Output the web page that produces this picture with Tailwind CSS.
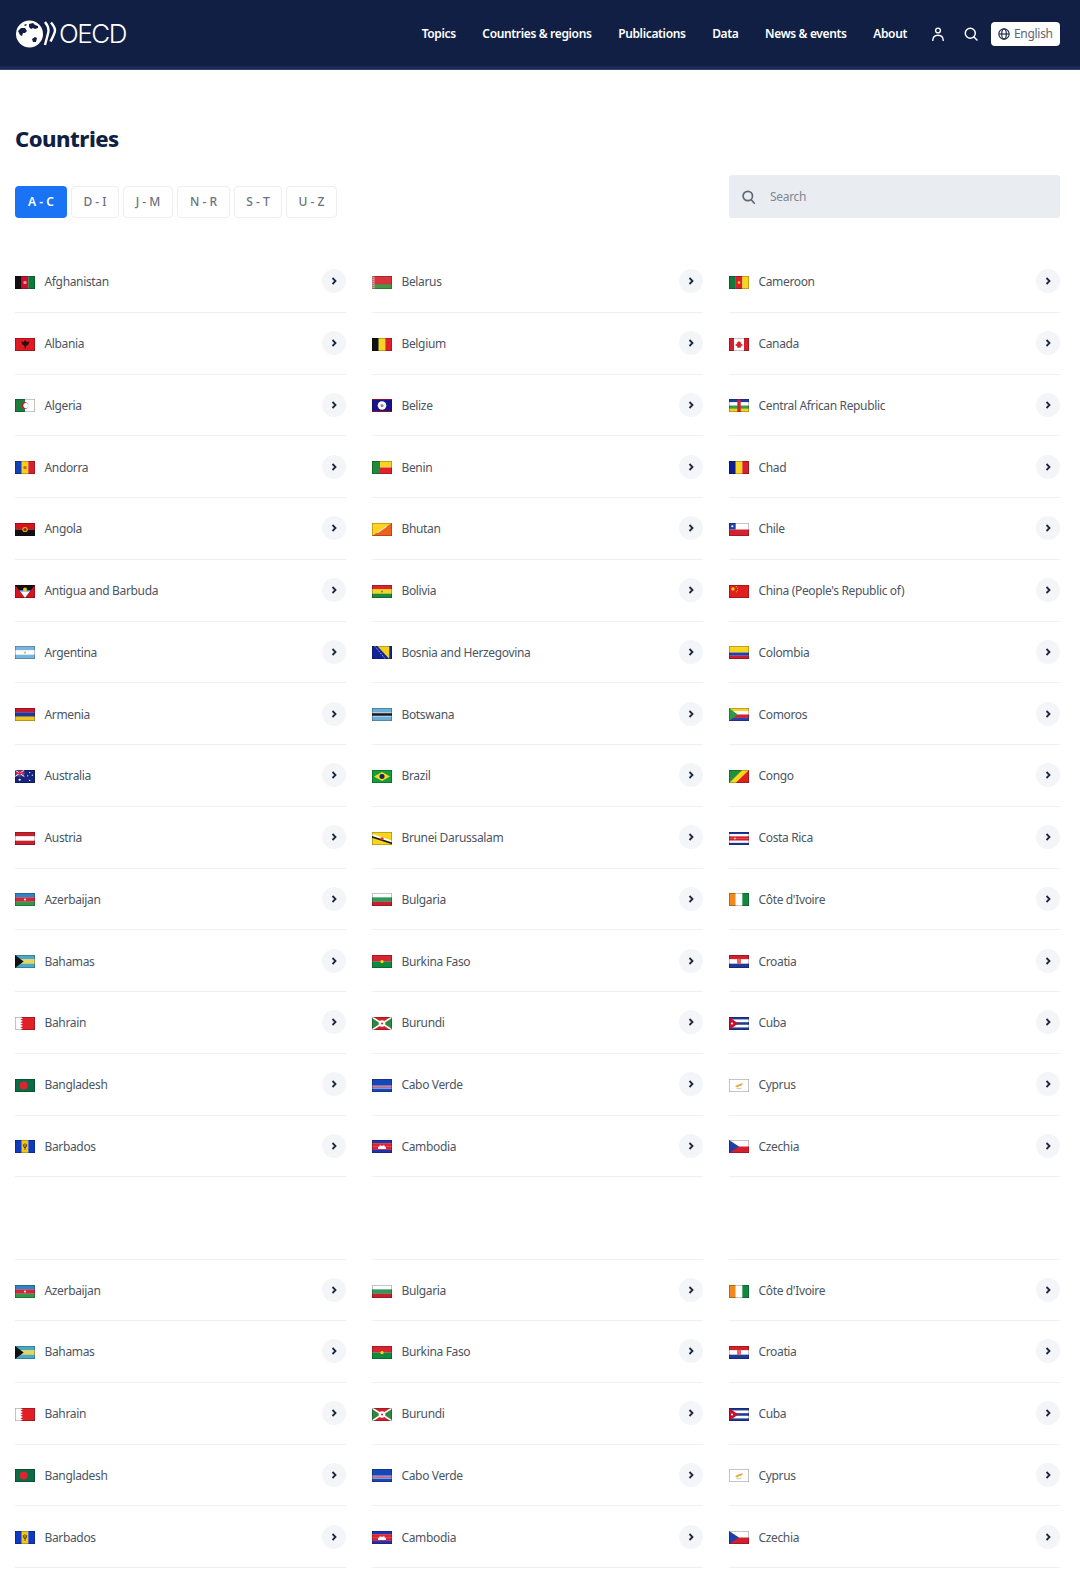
<!DOCTYPE html>
<html lang="en">
<head>
  <meta charset="UTF-8">
  <meta name="viewport" content="width=device-width, initial-scale=1.0">
  <title>Countries - OECD</title>
  <script src="https://cdn.jsdelivr.net/npm/@tailwindcss/browser@4"></script>
</head>
<body class="bg-white font-['Noto_Sans',sans-serif] h-[1570px] overflow-hidden">
  <header class="h-[70px] pb-[2px] bg-[#111f45] border-b border-[#31466f] shadow-[inset_0_-3px_0_#1a2a52] flex items-center justify-between pl-[15px] pr-[20px]">
    <a class="flex items-center text-white" href="#">
      <svg class="w-[43px] h-[30px]" viewBox="0 0 43 30">
        <circle cx="14.500" cy="15" r="13.500" fill="#fff"/>
        <path d="M3 12l3-3 4 0 2 3-2 2-2 0-1 3-2-1z M14 5l4-1 2 2 3 1 0 2-3 1-2-1-2 1-2-2z M17 20l3-2 2 1-1 4-3 0z M9 6l2-1 1 1-2 1z" fill="#111f45"/>
        <path d="M30 3c2.500 3 3.500 6 3.500 8.500S32 18 30 26" fill="none" stroke="#fff" stroke-width="2.400"/>
        <path d="M36 3.500c2.500 3 4 5.500 4 8s-2 6-4.500 11" fill="none" stroke="#fff" stroke-width="2.400"/>
      </svg>
      <span class="ml-[1px] text-[26px] leading-none font-['Inter',sans-serif] font-light tracking-[-1.500px]">OECD</span>
    </a>
    <nav class="flex items-center text-white">
      <div class="flex items-center gap-[26.600px] text-[12px] font-semibold tracking-[-0.35px]">
        <a href="#">Topics</a>
        <a href="#">Countries &amp; regions</a>
        <a href="#">Publications</a>
        <a href="#">Data</a>
        <a href="#">News &amp; events</a>
        <a href="#">About</a>
      </div>
      <svg class="ml-[24px] w-[14px] h-[14px]" viewBox="0 0 14 14" fill="none" stroke="#fff" stroke-width="1.400">
        <circle cx="7" cy="3.500" r="2.400"/>
        <path d="M1.800 13.500c0-3.500 2-5.300 5.200-5.300s5.200 1.800 5.200 5.300" stroke-linecap="round"/>
      </svg>
      <svg class="ml-[19px] w-[14px] h-[14px]" viewBox="0 0 14 14" fill="none" stroke="#fff" stroke-width="1.500">
        <circle cx="6.300" cy="6.300" r="5"/>
        <path d="M10 10l3 3" stroke-linecap="round"/>
      </svg>
      <button class="ml-[13px] w-[69px] h-[24px] bg-white rounded-[4px] flex items-center pl-[7px] gap-[4px] text-[12px] tracking-[-0.3px] text-[#5d6573]">
        <svg class="w-[12px] h-[12px]" viewBox="0 0 12 12" fill="none" stroke="#24304d" stroke-width="1.200">
          <circle cx="6" cy="6" r="5.200"/>
          <ellipse cx="6" cy="6" rx="2.300" ry="5.200"/>
          <path d="M1 6h10"/>
        </svg>
        English
      </button>
    </nav>
  </header>

  <main class="pl-[15px] pr-[20px]">
    <h1 class="pt-[50px] text-[22px] leading-[36px] font-extrabold text-[#111f45] tracking-[-0.5px]">Countries</h1>
    <div class="mt-[19px] flex items-end justify-between">
      <div class="flex gap-[4px] text-[12px] font-medium [word-spacing:-1px] text-[#6b7280]">
        <button class="h-[32px] w-[52px] rounded-[4px] bg-[#1a73f5] text-white font-semibold">A - C</button>
        <button class="h-[32px] w-[48px] rounded-[4px] border border-[#eceef1]">D - I</button>
        <button class="h-[32px] w-[50px] rounded-[4px] border border-[#eceef1]">J - M</button>
        <button class="h-[32px] w-[53px] rounded-[4px] border border-[#eceef1]">N - R</button>
        <button class="h-[32px] w-[48px] rounded-[4px] border border-[#eceef1]">S - T</button>
        <button class="h-[32px] w-[51px] rounded-[4px] border border-[#eceef1]">U - Z</button>
      </div>
      <div class="w-[331px] h-[43px] bg-[#e9edf1] rounded-[3px] flex items-center pl-[13px]">
        <svg class="w-[13px] h-[14px]" viewBox="0 0 13 14" fill="none" stroke="#5f6975" stroke-width="1.700">
          <circle cx="5.800" cy="6" r="4.700"/>
          <path d="M9.300 9.800l3 3.400" stroke-linecap="round"/>
        </svg>
        <span class="ml-[15px] text-[12px] tracking-[-0.3px] text-[#7d8792]">Search</span>
      </div>
    </div>

    <div id="list1" class="mt-[33px] grid grid-cols-3 gap-x-[26px]"></div>
    <div id="list2" class="mt-[82px] grid grid-cols-3 gap-x-[26px]"></div>
  </main>

  <script>
    const bars = (...c) => c.map((col, i) => `<rect y="${i * 20 / c.length}" width="30" height="${20 / c.length + 0.2}" fill="${col}"/>`).join('');
    const cols = (...c) => c.map((col, i) => `<rect x="${i * 30 / c.length}" width="${30 / c.length + 0.2}" height="20" fill="${col}"/>`).join('');
    const star = (x, y, r, fill) => `<circle cx="${x}" cy="${y}" r="${r}" fill="${fill}"/>`;

    const flags = {
      'Afghanistan': cols('#111', '#c8102e', '#0b7a3b') + star(15, 10, 2.500, '#ee9a9a'),
      'Albania': '<rect width="30" height="20" fill="#e01a22"/><path d="M15 3l3 3 4-1-2 5-3 2-1 5-1 0-1-5-3-2-2-5 4 1z" fill="#2a1010"/>',
      'Algeria': cols('#1c7d3d', '#fff') + '<circle cx="15" cy="10" r="5" fill="#d21034"/><circle cx="16.500" cy="10" r="4" fill="#fff"/>',
      'Andorra': cols('#1340b8', '#f5cf1a', '#d9202e') + star(15, 10, 2.500, '#b5721d'),
      'Angola': bars('#d4141f', '#111') + star(15, 10, 4, '#e8b90f') + star(15, 10, 2.500, '#a81a18'),
      'Antigua and Barbuda': '<rect width="30" height="20" fill="#d4141f"/><path d="M0 0h30L15 20z" fill="#111"/><path d="M7 9h16L15 20z" fill="#fff"/><path d="M6.500 7.500h17L22 10H8z" fill="#3b82d6"/><circle cx="15" cy="7" r="3" fill="#f6c51d"/>',
      'Argentina': bars('#79b5e2', '#fff', '#79b5e2') + star(15, 10, 1.700, '#e8b90f'),
      'Armenia': bars('#c9172b', '#1f3a9c', '#f0c419'),
      'Australia': '<rect width="30" height="20" fill="#16247f"/><rect width="14" height="10" fill="#5b3f8d"/><path d="M0 0l14 10M14 0L0 10" stroke="#fff" stroke-width="1.500"/><path d="M7 0v10M0 5h14" stroke="#e0243a" stroke-width="2"/>' + star(7, 15, 1.700, '#fff') + star(22, 4, 1, '#fff') + star(26, 8, 1, '#fff') + star(19, 9, 1, '#fff') + star(22, 16, 1.100, '#fff'),
      'Austria': bars('#c8202f', '#fff', '#c8202f'),
      'Azerbaijan': bars('#2f86c6', '#d3263b', '#36964b') + star(15, 10, 1.600, '#fff'),
      'Bahamas': bars('#4aa9c4', '#e6d65c', '#4aa9c4') + '<path d="M0 0l13 10L0 20z" fill="#111"/>',
      'Bahrain': '<rect width="30" height="20" fill="#e01f26"/><path d="M0 0h8l4 2-4 2 4 2-4 2 4 2-4 2 4 2-4 2 4 2-4 2H0z" fill="#fff"/>',
      'Bangladesh': '<rect width="30" height="20" fill="#0b6b45"/><circle cx="13" cy="10" r="6" fill="#e0242f"/>',
      'Barbados': cols('#0f38c4', '#f5c518', '#0f38c4') + '<path d="M15 5v10M12.500 6.500c0 4 1 5 2.500 5s2.500-1 2.500-5" fill="none" stroke="#222" stroke-width="1.200"/>',
      'Belarus': '<rect width="30" height="20" fill="#d8343c"/><rect y="13" width="30" height="7" fill="#3f9b46"/><rect width="3.500" height="20" fill="#f3c9c9"/><path d="M1.800 0v20" stroke="#d8343c" stroke-width="1.500" stroke-dasharray="2 1"/>',
      'Belgium': cols('#111', '#f8d51f', '#e0222f'),
      'Belize': '<rect width="30" height="20" fill="#17158c"/><rect width="30" height="1.500" fill="#c8142c"/><rect y="18.500" width="30" height="1.500" fill="#c8142c"/><circle cx="15" cy="10" r="6.500" fill="#fff"/><circle cx="15" cy="10" r="2.500" fill="#8a8fa8"/>',
      'Benin': '<rect width="30" height="10" fill="#f6d32a"/><rect y="10" width="30" height="10" fill="#e0202b"/><rect width="12" height="20" fill="#1f8a3c"/>',
      'Bhutan': '<rect width="30" height="20" fill="#ffd21f"/><path d="M30 0v20H0z" fill="#e9621e"/><path d="M8 15L22 5" stroke="#f6e1c0" stroke-width="2"/>',
      'Bolivia': bars('#d8262c', '#f4d81c', '#1a8a3c') + star(15, 10, 1.500, '#a5702a'),
      'Bosnia and Herzegovina': '<rect width="30" height="20" fill="#12239a"/><path d="M8 0h18v20z" fill="#f5cf1f"/><path d="M4 0l16 20" stroke="#dfe3f2" stroke-width="1.500" stroke-dasharray="1.500 2"/>',
      'Botswana': '<rect width="30" height="20" fill="#6aaed9"/><rect y="7" width="30" height="6" fill="#fff"/><rect y="8" width="30" height="4" fill="#1b1b1b"/>',
      'Brazil': '<rect width="30" height="20" fill="#149b3a"/><path d="M15 3l12 7-12 7-12-7z" fill="#f6d81c"/><circle cx="15" cy="10" r="3.800" fill="#16236e"/>',
      'Brunei Darussalam': '<rect width="30" height="20" fill="#f8d51f"/><path d="M0 3l30 10v3L0 6z" fill="#fff"/><path d="M0 6l30 10v3L0 9z" fill="#1b1b1b"/><circle cx="15" cy="10.500" r="2.500" fill="#d0312d"/>',
      'Bulgaria': bars('#fff', '#2f9a5c', '#c8202c'),
      'Burkina Faso': bars('#d8242e', '#0f8a3e') + star(15, 10, 2.500, '#f8d51f'),
      'Burundi': '<path d="M0 0h30L15 10z M0 20h30L15 10z" fill="#d4202c"/><path d="M0 0l15 10L0 20z M30 0L15 10l15 10z" fill="#2b8a3e"/><path d="M0 0l30 20M30 0L0 20" stroke="#fff" stroke-width="2.500"/><circle cx="15" cy="10" r="5" fill="#fff"/>' + star(15, 10, 1.500, '#d4202c'),
      'Cabo Verde': '<rect width="30" height="20" fill="#1646b8"/><rect y="10" width="30" height="5" fill="#a9b8e6"/><rect y="11.500" width="30" height="2" fill="#c4566a"/>',
      'Cambodia': bars('#2034b0', '#e0202f', '#e0202f', '#2034b0') + '<path d="M9 14v-3l2-1 1-3 1 2h4l1-2 1 3 2 1v3z" fill="#fff"/>',
      'Cameroon': cols('#107a3a', '#d9202c', '#f8d51f') + star(15, 10, 2, '#f8d51f'),
      'Canada': '<rect width="30" height="20" fill="#fff"/><rect width="7.500" height="20" fill="#d4202c"/><rect x="22.500" width="7.500" height="20" fill="#d4202c"/><path d="M15 4l1.500 3 2-1-1 4 2-1 1 2-3 2v2h-5v-2l-3-2 1-2 2 1-1-4 2 1z" fill="#d4202c"/>',
      'Central African Republic': bars('#1c3da0', '#fff', '#3f9b46', '#f5d21e') + '<rect x="12.500" width="5" height="20" fill="#d4202c"/>',
      'Chad': cols('#0f1e8f', '#f8d51f', '#d9202c'),
      'Chile': '<rect width="30" height="10" fill="#fff"/><rect y="10" width="30" height="10" fill="#d4232f"/><rect width="10" height="10" fill="#1f40a8"/>' + star(5, 5, 1.600, '#fff'),
      "China (People's Republic of)": '<rect width="30" height="20" fill="#e0201f"/>' + star(6, 6, 2.500, '#f8d51f') + star(11, 2.500, .8, '#f8d51f') + star(13, 5, .8, '#f8d51f') + star(13, 8.500, .8, '#f8d51f') + star(11, 10.500, .8, '#f8d51f'),
      'Colombia': '<rect width="30" height="10" fill="#f8d51f"/><rect y="10" width="30" height="5" fill="#2340a8"/><rect y="15" width="30" height="5" fill="#c8202f"/>',
      'Comoros': bars('#f6d32a', '#fff', '#d9202c', '#2840b0') + '<path d="M0 0l13 10L0 20z" fill="#2f9a46"/>',
      'Congo': '<rect width="30" height="20" fill="#f8d51f"/><path d="M0 0h20L0 20z" fill="#1f8f3e"/><path d="M30 0v20H10z" fill="#dd2020"/>',
      'Costa Rica': bars('#1f3a94', '#fff', '#d4202c', '#d4202c', '#fff', '#1f3a94') + star(9, 10, 1.500, '#e8c6a0'),
      "Côte d'Ivoire": cols('#f08a1f', '#fff', '#128a3e'),
      'Croatia': bars('#d4202c', '#fff', '#1f3a9c') + '<rect x="12" y="6" width="6" height="8" fill="#d66"/>',
      'Cuba': bars('#1f3a94', '#fff', '#1f3a94', '#fff', '#1f3a94') + '<path d="M0 0l14 10L0 20z" fill="#c8102e"/>' + star(4.500, 10, 1.600, '#fff'),
      'Cyprus': '<rect width="30" height="20" fill="#fff"/><path d="M9 11l4-2 8-3-2 4-4 1-2 2z" fill="#eda72c"/><path d="M11 14c2 1.500 6 1.500 8 0" fill="none" stroke="#8fb36f" stroke-width="1"/>',
      'Czechia': '<rect width="30" height="10" fill="#fff"/><rect y="10" width="30" height="10" fill="#d4202c"/><path d="M0 0l15 10L0 20z" fill="#1f40a8"/>'
    };

    const row = (name, first) => `
      <a href="#" class="${first ? 'border-t' : ''} h-[61.75px] border-b border-[#eef0f2] flex items-center text-[12px] text-[#4b5563] tracking-[-0.35px]">
        <svg class="w-[20px] h-[13px] mt-[2px] shrink-0" viewBox="0 0 30 20" preserveAspectRatio="none">
          ${flags[name]}
          <rect x=".5" y=".5" width="29" height="19" fill="none" stroke="#000" stroke-opacity=".35" stroke-width="1"/>
        </svg>
        <span class="ml-[9.500px] mt-[2px] flex-1">${name}</span>
        <span class="w-[24px] h-[24px] rounded-full bg-[#f3f5f8] flex items-center justify-center">
          <svg class="w-[6px] h-[8px]" viewBox="0 0 6 8" fill="none" stroke="#1c2740" stroke-width="1.800"><path d="M1.500 1l3 3-3 3"/></svg>
        </span>
      </a>`;

    const column1 = ['Afghanistan', 'Albania', 'Algeria', 'Andorra', 'Angola', 'Antigua and Barbuda', 'Argentina', 'Armenia', 'Australia', 'Austria', 'Azerbaijan', 'Bahamas', 'Bahrain', 'Bangladesh', 'Barbados'];
    const column2 = ['Belarus', 'Belgium', 'Belize', 'Benin', 'Bhutan', 'Bolivia', 'Bosnia and Herzegovina', 'Botswana', 'Brazil', 'Brunei Darussalam', 'Bulgaria', 'Burkina Faso', 'Burundi', 'Cabo Verde', 'Cambodia'];
    const column3 = ['Cameroon', 'Canada', 'Central African Republic', 'Chad', 'Chile', "China (People's Republic of)", 'Colombia', 'Comoros', 'Congo', 'Costa Rica', "Côte d'Ivoire", 'Croatia', 'Cuba', 'Cyprus', 'Czechia'];

    // the repeated block starts with a rule above its first row
    const fill = (id, from, topRule) => {
      let html = '';
      for (let i = from; i < column1.length; i++) {
        const first = topRule && i === from;
        html += row(column1[i], first) + row(column2[i], first) + row(column3[i], first);
      }
      document.getElementById(id).innerHTML = html;
    };
    fill('list1', 0, false);
    fill('list2', 10, true);
  </script>
</body>
</html>
